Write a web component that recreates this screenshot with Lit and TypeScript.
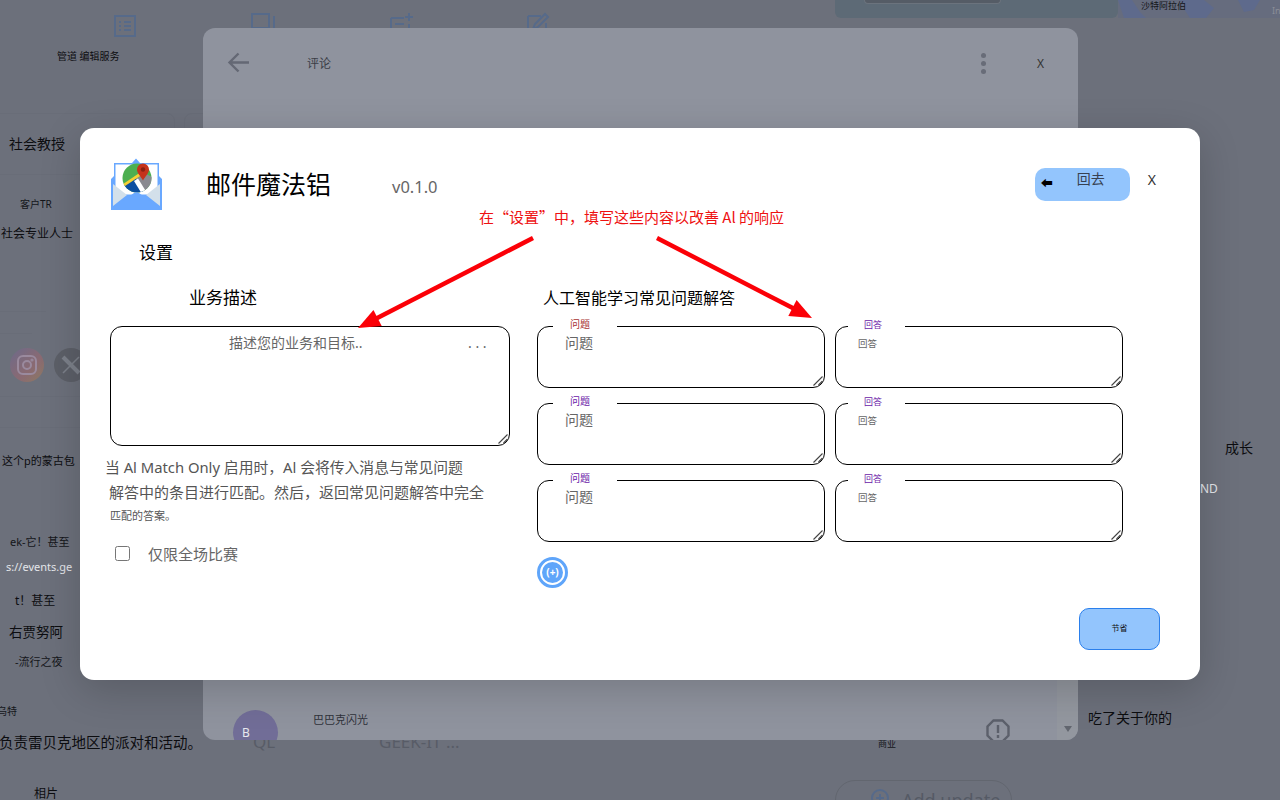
import { LitElement, html, css, svg } from 'lit';
import { customElement } from 'lit/decorators.js';

const SANS = css`"Noto Sans", "Noto Sans CJK SC", sans-serif`;

// scattered bits of the page behind the dimmed overlay
const bits = [
  { t: '管道 编辑服务', x: 57, y: 49, s: 10, c: '#0c0d10' },
  { t: '社会教授', x: 9, y: 134, s: 14, c: '#0c0d10' },
  { t: '客户TR', x: 20, y: 197, s: 10, c: '#14161a' },
  { t: '社会专业人士', x: 1, y: 226, s: 12, c: '#0c0d10' },
  { t: '这个p的蒙古包', x: 2, y: 453, s: 11, c: '#0c0d10' },
  { t: 'ek-它！甚至', x: 10, y: 534, s: 11, c: '#14161a' },
  { t: 's://events.ge', x: 6, y: 559, s: 11, c: '#e4e6ea' },
  { t: 't！甚至', x: 15, y: 593, s: 12, c: '#0c0d10' },
  { t: '右贾努阿', x: 9, y: 623, s: 13.5, c: '#0c0d10' },
  { t: '-流行之夜', x: 15, y: 654, s: 11, c: '#14161a' },
  { t: '乌特', x: -3, y: 704, s: 10, c: '#14161a' },
  { t: '负责雷贝克地区的派对和活动。', x: -1, y: 732, s: 14.5, c: '#0c0d10' },
  { t: '相片', x: 34, y: 786, s: 12, c: '#0c0d10' },
  { t: 'QL', x: 253, y: 730, s: 17, c: '#585c67' },
  { t: 'GEEK-IT ...', x: 379, y: 730, s: 17, c: '#585c67' },
  { t: '成长', x: 1225, y: 438, s: 14, c: '#0c0d10' },
  { t: 'ND', x: 1200, y: 481, s: 12, c: '#e4e6ea' },
  { t: '吃了关于你的', x: 1088, y: 708, s: 14, c: '#0c0d10' },
  { t: '沙特阿拉伯', x: 1141, y: 0, s: 9, c: '#14161a' },
  { t: 'In', x: 1272, y: 5, s: 9, c: '#8a8e98' },
  { t: '商业', x: 878, y: 738, s: 9, c: '#14161a' },
  { t: 'Add update', x: 902, y: 788, s: 18, c: '#555a65' },
];

const faqRows = [
  { qTone: 'red', aTone: 'purple' },
  { qTone: 'purple', aTone: 'purple' },
  { qTone: 'purple', aTone: 'purple' },
];

@customElement('app-root')
export class AppRoot extends LitElement {
  static styles = css`
    :host {
      display: block;
      position: relative;
      width: 1280px;
      height: 800px;
      overflow: hidden;
      background: #6c707b;
      font-family: ${SANS};
    }
    .bit {
      position: absolute;
      white-space: nowrap;
      line-height: 1.4;
    }
    .page-icon {
      position: absolute;
      fill: none;
      stroke: #566a8a;
      stroke-width: 2;
    }
    .promo {
      position: absolute;
      left: 835px;
      top: 0;
      width: 283px;
      height: 18px;
      background: #5d6a76;
      border-radius: 0 0 6px 6px;
    }
    .promo i {
      display: block;
      width: 135px;
      height: 3px;
      margin-left: 29px;
      border: 1px solid #6b737d;
      border-top: 0;
      border-radius: 0 0 10px 10px;
      background: #555c66;
    }
    .map {
      position: absolute;
      left: 1118px;
      top: 0;
    }
    .card {
      position: absolute;
      top: 113px;
      height: 60px;
      border: 1px solid #696d78;
      border-radius: 8px;
    }
    .rule {
      position: absolute;
      left: 0;
      height: 1px;
      background: #696d78;
    }
    .social {
      position: absolute;
      top: 348px;
      width: 34px;
      height: 34px;
      border-radius: 50%;
      display: flex;
      align-items: center;
      justify-content: center;
    }
    .insta {
      left: 10px;
      background: linear-gradient(135deg, #6d6a8a, #8a6a72 60%, #8d7a62);
    }
    .x-logo {
      left: 54px;
      background: #5c5f68;
    }
    .update-box {
      position: absolute;
      left: 835px;
      top: 780px;
      width: 175px;
      height: 60px;
      border: 1px solid #62666f;
      border-radius: 20px;
    }
    .update-icon {
      position: absolute;
      left: 871px;
      top: 789px;
    }

    .dialog {
      position: absolute;
      left: 203px;
      top: 28px;
      width: 875px;
      height: 712px;
      background: #8f939e;
      border-radius: 12px;
      overflow: hidden;
      display: flex;
      flex-direction: column;
    }
    .dialog-head {
      display: flex;
      align-items: center;
      height: 70px;
      padding-left: 24px;
      color: #3b3e47;
    }
    .dialog-head .title {
      margin-left: 56px;
      font-size: 12px;
    }
    .dots {
      display: flex;
      flex-direction: column;
      gap: 3px;
      margin-left: auto;
    }
    .dots i {
      width: 5px;
      height: 5px;
      border-radius: 50%;
      background: #686c78;
    }
    .dialog-head .close {
      margin: 0 34px 0 51px;
      font-size: 12px;
    }
    .comment {
      display: flex;
      margin-top: auto;
      margin-bottom: -15px;
      padding: 0 30px;
      height: 45px;
    }
    .avatar {
      width: 45px;
      height: 45px;
      flex: none;
      box-sizing: border-box;
      padding-left: 9px;
      border-radius: 50%;
      background: #716d97;
      color: #e8e8ee;
      font-size: 12px;
      line-height: 45px;
    }
    .comment .name {
      margin-left: 35px;
      font-size: 11px;
      color: #2f323a;
      line-height: 20px;
    }
    .comment svg {
      margin: 9px 38px 0 auto;
    }
    .scroll {
      position: absolute;
      right: 0;
      top: 640px;
      bottom: 0;
      width: 21px;
      background: #93979f;
      display: flex;
      flex-direction: column;
      justify-content: flex-end;
      align-items: center;
      padding-bottom: 8px;
      box-sizing: border-box;
    }
    .scroll i {
      border: 4.5px solid transparent;
      border-top: 6px solid #62666f;
      border-bottom: 0;
    }

    .modal {
      position: absolute;
      left: 80px;
      top: 128px;
      width: 1120px;
      height: 552px;
      box-sizing: border-box;
      padding: 30px 40px 30px 30px;
      background: #fff;
      border-radius: 14px;
      box-shadow: 0 10px 40px rgba(0, 0, 0, 0.18);
      display: flex;
      flex-direction: column;
      color: #000;
    }
    .arrows {
      position: absolute;
      left: 0;
      top: 0;
      pointer-events: none;
    }
    .head {
      display: flex;
      align-items: center;
      height: 52px;
    }
    .head h1 {
      margin: 0 0 0 43px;
      font-size: 25px;
      font-weight: 400;
      line-height: 32px;
    }
    .version {
      margin: 4px 0 0 61px;
      font-size: 16.5px;
      color: #666;
    }
    .back {
      display: flex;
      align-items: flex-start;
      margin: 0 0 0 auto;
      box-sizing: border-box;
      width: 95px;
      height: 33px;
      padding: 0 0 0 6px;
      border: 0;
      border-radius: 10px;
      background: #93c5fd;
      color: #374151;
      font: 14px/22px ${SANS};
    }
    .back b {
      margin-top: 5px;
      color: #000;
      font-size: 12px;
    }
    .back span {
      margin-left: 24px;
    }
    .close {
      margin: -10px 4px 0 18px;
      font-size: 14px;
      color: #333;
    }
    .note {
      margin: -2px 0 0 369px;
      height: 18px;
      font-family: "Noto Sans CJK SC", sans-serif;
      font-size: 15px;
      line-height: 18px;
      color: #ee1111;
    }
    .settings {
      margin: 16px 0 0 29px;
      font-size: 17px;
      font-weight: 400;
      line-height: 22px;
    }
    .cols {
      display: flex;
      gap: 27px;
      margin-top: 22px;
    }
    .col-left {
      width: 400px;
    }
    h3 {
      margin: 0 0 16px;
      font-size: 16px;
      font-weight: 400;
      line-height: 24px;
    }
    .col-left h3 {
      padding-left: 79px;
      font-size: 17px;
    }
    .col-right h3 {
      padding-left: 6px;
    }
    textarea {
      display: block;
      box-sizing: border-box;
      width: 100%;
      margin: 0;
      border: 1.3px solid #000;
      border-radius: 12px;
      outline: none;
      background: #fff;
      resize: none;
      font-family: ${SANS};
    }
    textarea::placeholder {
      color: #666;
    }
    .biz {
      height: 120px;
      padding: 5px 0 0 118px;
      font-size: 14px;
    }
    .help {
      margin: 9px 0 0 -5px;
      font-size: 15px;
      line-height: 24.5px;
      color: #555;
      white-space: nowrap;
    }
    .help span {
      display: block;
    }
    .help .l1 {
      font-size: 14.8px;
    }
    .help .l2 {
      padding-left: 4px;
    }
    .help .l3 {
      padding-left: 5px;
      font-size: 11px;
    }
    .only {
      display: flex;
      align-items: center;
      margin: 14px 0 0 5px;
      font-size: 15px;
      color: #666;
    }
    .only input {
      width: 15px;
      height: 15px;
      margin: 0 18px 0 0;
    }
    .faq {
      display: grid;
      grid-template-columns: 288px 288px;
      gap: 15px 10px;
    }
    .cell {
      position: relative;
    }
    .faq textarea {
      height: 62px;
    }
    .grip {
      position: absolute;
      right: 2px;
      bottom: 2px;
      pointer-events: none;
    }
    .q {
      padding: 5px 0 0 27px;
      font-size: 14px;
    }
    .a {
      padding: 9px 0 0 22px;
      font-size: 9.5px;
    }
    .tag {
      position: absolute;
      top: -8px;
      height: 13px;
      background: #fff;
      font-size: 10px;
      line-height: 13px;
    }
    .cell.qc .tag {
      left: 16px;
      width: 64px;
      padding-left: 17px;
      box-sizing: border-box;
    }
    .cell.ac .tag {
      left: 13px;
      width: 57px;
      padding-left: 16px;
      box-sizing: border-box;
      font-size: 9px;
    }
    .tag.red {
      color: #a83232;
    }
    .tag.purple {
      color: #6b21a8;
    }
    .add {
      display: flex;
      align-items: center;
      justify-content: center;
      box-sizing: border-box;
      width: 31px;
      height: 31px;
      margin-top: 15px;
      padding: 0;
      border: 3px solid #5fa5fa;
      border-radius: 50%;
      background: #fff;
    }
    .add span {
      width: 21px;
      height: 21px;
      border-radius: 50%;
      background: #5fa5fa;
      color: #fff;
      font: 700 10px/20px ${SANS};
      text-align: center;
    }
    .foot {
      display: flex;
      justify-content: flex-end;
      margin-top: auto;
    }
    .save {
      width: 81px;
      height: 42px;
      padding: 0 0 4px;
      border: 1px solid #2a7fec;
      border-radius: 10px;
      background: #93c5fd;
      color: #111;
      font: 8px ${SANS};
    }
  `;

  private logo() {
    return html`<svg width="53" height="52" viewBox="0 0 53 52">
      <defs>
        <clipPath id="disc"><circle cx="27" cy="20" r="14.5" /></clipPath>
      </defs>
      <path d="M1 21 L4 18 V5 H22 L26 0.5 L30 5 H49 V18 L52 21 V52 H1Z" fill="#69a8ff" />
      <rect x="5.5" y="6.5" width="42" height="30" fill="#fff" />
      <path d="M3 26 L17 37 L3 48Z M50 26 L36 37 L50 48Z" fill="#d3e0ea" />
      <g clip-path="url(#disc)">
        <rect x="12" y="5" width="30" height="30" fill="#4caf50" />
        <path d="M10 30 L26 20 L36 36 H10Z" fill="#0d4fa0" />
        <path d="M26 21 L34 15 L44 20 V36 H36Z" fill="#8a8a90" />
        <path d="M24 23 L28 20.5 L37 35 L32 36Z" fill="#fff" />
        <path d="M11 29 L35 13" stroke="#f5d033" stroke-width="2.8" />
      </g>
      <path d="M33 5.5 a6 6 0 0 1 6 6 c0 4 -4 7 -6 11 c-2 -4 -6 -7 -6 -11 a6 6 0 0 1 6 -6Z" fill="#c5321b" />
      <circle cx="33" cy="11.5" r="2.2" fill="#8a2010" />
      <path d="M3 50 L24 35 Q26.5 33.4 29 35 L50 50Z" fill="#69a8ff" />
    </svg>`;
  }

  private grip() {
    return html`<svg class="grip" width="10" height="10" viewBox="0 0 10 10" fill="none" stroke="#444" stroke-width="1.1">
      <path d="M9.5 0.5 L0.5 9.5 M9.5 5 L5.5 9" />
    </svg>`;
  }

  private arrow(x1: number, y1: number, x2: number, y2: number) {
    const a = Math.atan2(y2 - y1, x2 - x1);
    const back = (d: number, o: number) =>
      `${x2 - Math.cos(a) * d - Math.sin(a) * o},${y2 - Math.sin(a) * d + Math.cos(a) * o}`;
    return svg`
      <line x1=${x1} y1=${y1} x2=${x2 - Math.cos(a) * 14} y2=${y2 - Math.sin(a) * 14} stroke="#fb0007" stroke-width="4.5" />
      <polygon points="${x2},${y2} ${back(22, 9)} ${back(22, -9)}" fill="#fb0007" />`;
  }

  private backdrop() {
    return html`
      <div class="promo"><i></i></div>
      <svg class="map" width="162" height="18" viewBox="0 0 162 18">
        <rect width="162" height="18" fill="#666c7e" />
        <path d="M0 0h14l8 12 6 6H6ZM62 0h24l10 8-8 10H72l-6-9ZM120 0h22l-6 10-10 2Z" fill="#5e6a8c" />
      </svg>
      <div class="card" style="left:-10px;width:183px"></div>
      <div class="card" style="left:184px;width:200px"></div>
      <div class="rule" style="top:311px;width:46px"></div>
      <div class="rule" style="top:333px;width:32px"></div>
      <div class="rule" style="top:396px;width:80px"></div>
      <div class="rule" style="top:427px;width:80px"></div>
      ${bits.map(
        b => html`<span class="bit" style="left:${b.x}px;top:${b.y}px;font-size:${b.s}px;color:${b.c}">${b.t}</span>`,
      )}
      <svg class="page-icon" style="left:113px;top:14px" width="24" height="24" viewBox="0 0 24 24">
        <rect x="2" y="2" width="20" height="20" />
        <path d="M6 8h2M11 8h7M6 12h2M11 12h7M6 16h2M11 16h7" />
      </svg>
      <svg class="page-icon" style="left:250px;top:12px" width="26" height="24" viewBox="0 0 26 24">
        <rect x="2" y="2" width="17" height="14" />
        <path d="M24 4v16" />
      </svg>
      <svg class="page-icon" style="left:388px;top:12px" width="26" height="24" viewBox="0 0 26 24">
        <path d="M3 6h13M3 6v16h18V12M7 12h9M7 17h9M21 1v8M17 5h8" />
      </svg>
      <svg class="page-icon" style="left:525px;top:12px" width="26" height="24" viewBox="0 0 26 24">
        <path d="M3 4h13M3 4v18h18V11M8 17l2-5L20 2l3 3L13 15Z" />
      </svg>
      <div class="social insta">
        <svg width="22" height="22" viewBox="0 0 22 22" fill="none" stroke="#9a8a9e" stroke-width="2">
          <rect x="2" y="2" width="18" height="18" rx="5" />
          <circle cx="11" cy="11" r="4" />
          <circle cx="16" cy="6" r="0.6" />
        </svg>
      </div>
      <div class="social x-logo">
        <svg width="20" height="20" viewBox="0 0 20 20" fill="none" stroke="#7c808a">
          <path d="M2 2 L18 18" stroke-width="4" />
          <path d="M18 2 L2 18" stroke-width="1.6" />
        </svg>
      </div>
      <div class="update-box"></div>
      <svg class="update-icon" width="18" height="18" viewBox="0 0 18 18" fill="none" stroke="#566a8a" stroke-width="2">
        <circle cx="9" cy="9" r="8" />
        <path d="M9 5v8M5 9h8" />
      </svg>
    `;
  }

  private dialog() {
    return html`<section class="dialog">
      <div class="dialog-head">
        <svg width="24" height="24" viewBox="0 0 24 24" fill="none" stroke="#646874" stroke-width="2.4">
          <path d="M22 11.5H3M11.5 2.5L2.5 11.5L11.5 20.5" />
        </svg>
        <span class="title">评论</span>
        <span class="dots"><i></i><i></i><i></i></span>
        <span class="close">X</span>
      </div>
      <div class="comment">
        <div class="avatar">B</div>
        <span class="name">巴巴克闪光</span>
        <svg width="24" height="24" viewBox="0 0 24 24" fill="none" stroke="#5c606b" stroke-width="2.4">
          <path d="M7.5 1.5h9l6 6v9l-6 6h-9l-6-6v-9Z" />
          <path d="M12 6v8M12 16v3" />
        </svg>
      </div>
      <div class="scroll"><i></i></div>
    </section>`;
  }

  render() {
    return html`
      ${this.backdrop()} ${this.dialog()}
      <section class="modal">
        <header class="head">
          ${this.logo()}
          <h1>邮件魔法铝</h1>
          <span class="version">v0.1.0</span>
          <button class="back"><b>⬅</b><span>回去</span></button>
          <span class="close">X</span>
        </header>
        <div class="note">在“设置”中，填写这些内容以改善 Al 的响应</div>
        <h2 class="settings">设置</h2>
        <div class="cols">
          <div class="col-left">
            <h3>业务描述</h3>
            <div class="cell">
              <textarea class="biz" placeholder="描述您的业务和目标..                             . . ."></textarea>
              ${this.grip()}
            </div>
            <p class="help">
              <span class="l1">当 Al Match Only 启用时，Al 会将传入消息与常见问题</span>
              <span class="l2">解答中的条目进行匹配。然后，返回常见问题解答中完全</span>
              <span class="l3">匹配的答案。</span>
            </p>
            <label class="only"><input type="checkbox" />仅限全场比赛</label>
          </div>
          <div class="col-right">
            <h3>人工智能学习常见问题解答</h3>
            <div class="faq">
              ${faqRows.map(
                r => html`
                  <div class="cell qc">
                    <textarea class="q" placeholder="问题"></textarea>
                    <span class="tag ${r.qTone}">问题</span>
                    ${this.grip()}
                  </div>
                  <div class="cell ac">
                    <textarea class="a" placeholder="回答"></textarea>
                    <span class="tag ${r.aTone}">回答</span>
                    ${this.grip()}
                  </div>
                `,
              )}
            </div>
            <button class="add"><span>(+)</span></button>
          </div>
        </div>
        <div class="foot"><button class="save">节省</button></div>
        <svg class="arrows" width="1120" height="552">
          ${this.arrow(453, 110, 278, 200)} ${this.arrow(577, 110, 732, 190)}
        </svg>
      </section>
    `;
  }
}
